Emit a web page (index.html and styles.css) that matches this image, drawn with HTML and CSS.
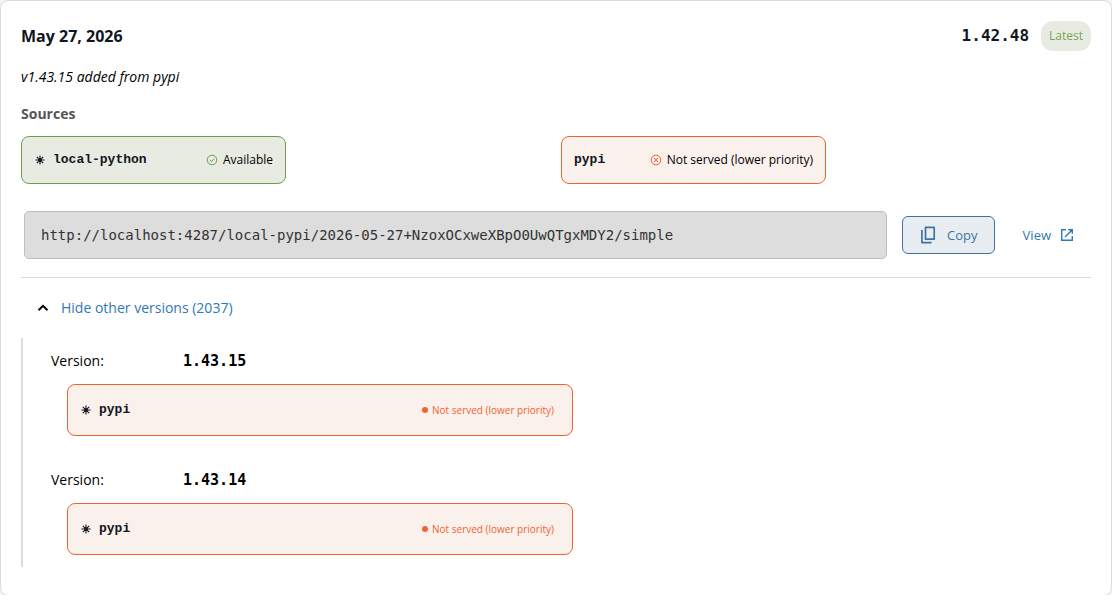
FILE: index.html
```
<!DOCTYPE html>
<html lang="en">
<head>
    <meta charset="utf-8">
    <title>May 27, 2026 - 1.42.48</title>
    <link rel="stylesheet" href="styles.css">
</head>
<body>
    <!-- Shared icons -->
    <svg class="sprite" aria-hidden="true">
        <symbol id="icon-star" viewBox="0 0 10 10">
            <path d="M5 0.4V9.6M0.4 5H9.6M1.8 1.8L8.2 8.2M8.2 1.8L1.8 8.2" stroke="currentColor" stroke-width="1.1" fill="none"/>
            <circle cx="5" cy="5" r="1.8" fill="currentColor" stroke="none"/>
        </symbol>
    </svg>

    <main class="card">
        <header class="card-header">
            <h1>May 27, 2026</h1>
            <div class="current">
                <span class="current-version">1.42.48</span>
                <span class="badge">Latest</span>
            </div>
        </header>

        <p class="note">v1.43.15 added from pypi</p>

        <h2>Sources</h2>
        <div class="sources">
            <div class="source available">
                <svg class="star"><use href="#icon-star"/></svg>
                <span class="source-name">local-python</span>
                <span class="source-status">
                    <svg class="status-icon" viewBox="0 0 12 12">
                        <circle cx="6" cy="6" r="4.8"/>
                        <path d="M3.8 6.1L5.4 7.6L8.2 4.7"/>
                    </svg>
                    Available
                </span>
            </div>
            <div class="source not-served">
                <span class="source-name">pypi</span>
                <span class="source-status">
                    <svg class="status-icon" viewBox="0 0 12 12">
                        <circle cx="6" cy="6" r="4.8"/>
                        <path d="M4 4L8 8M8 4L4 8"/>
                    </svg>
                    Not served (lower priority)
                </span>
            </div>
        </div>

        <div class="url-row">
            <input class="url" type="text" readonly aria-label="Repository URL" value="http://localhost:4287/local-pypi/2026-05-27+NzoxOCxweXBpO0UwQTgxMDY2/simple">
            <button class="copy" type="button">
                <svg class="copy-icon" viewBox="0 0 20 20">
                    <path d="M6.5 2.4H15.2V14.2H6.5ZM2.9 5V17.6H12.6"/>
                </svg>
                Copy
            </button>
            <a class="view" href="#">
                View
                <svg class="view-icon" viewBox="0 0 14 14">
                    <path d="M6 1.7H1.7V12.3H12.3V8M8.2 1.7H12.3V5.8M12.1 1.9L5 9"/>
                </svg>
            </a>
        </div>

        <button class="toggle" type="button" aria-expanded="true">
            <svg class="chevron" viewBox="0 0 12 12">
                <path d="M1.5 8.3L6 3.8L10.5 8.3"/>
            </svg>
            Hide other versions (2037)
        </button>

        <div class="versions">
            <section class="version">
                <div class="version-title">
                    <span>Version:</span>
                    <strong>1.43.15</strong>
                </div>
                <div class="version-sources">
                    <div class="source not-served">
                        <svg class="star"><use href="#icon-star"/></svg>
                        <span class="source-name">pypi</span>
                        <span class="dot-status">Not served (lower priority)</span>
                    </div>
                </div>
            </section>
            <section class="version">
                <div class="version-title">
                    <span>Version:</span>
                    <strong>1.43.14</strong>
                </div>
                <div class="version-sources">
                    <div class="source not-served">
                        <svg class="star"><use href="#icon-star"/></svg>
                        <span class="source-name">pypi</span>
                        <span class="dot-status">Not served (lower priority)</span>
                    </div>
                </div>
            </section>
        </div>
    </main>
</body>
</html>
```
FILE: styles.css
```
* {
    box-sizing: border-box;
}
body {
    margin: 0;
    background-color: #f5f5f5;
    color: #000;
    font-family: "Open Sans", sans-serif;
    font-size: 14px;
    line-height: 20px;
}
h1, h2, p {
    margin: 0;
}
button, input {
    font: inherit;
}
svg {
    flex-shrink: 0;
    fill: none;
    stroke: currentColor;
}
.sprite {
    display: none;
}
.card {
    padding: 20px 20px 28px;
    border: 1px solid #dcdcdc;
    border-radius: 8px;
    background-color: #fff;
}

/* Header */
.card-header {
    display: flex;
    justify-content: space-between;
    align-items: center;
}
h1 {
    color: #111722;
    font-size: 16px;
}
.current {
    display: flex;
    align-items: center;
    gap: 12px;
}
.current-version {
    color: #111722;
    font-family: "DejaVu Sans Mono", monospace;
    font-size: 16px;
    font-weight: bold;
}
.badge {
    padding: 5px 8px;
    border-radius: 12px;
    background-color: #e8ebe1;
    color: #7aa35a;
    font-size: 12px;
}
.note {
    margin-top: 16px;
    font-size: 14px;
    font-style: italic;
}
h2 {
    margin-top: 17px;
    color: #555;
    font-size: 14px;
}

/* Sources */
.sources {
    display: grid;
    grid-template-columns: 1fr 1fr;
    gap: 10px;
    margin-top: 12px;
}
.source {
    display: flex;
    align-items: center;
    border: 1px solid;
    border-radius: 8px;
}
.sources .source {
    width: 50%;
    height: 48px;
    padding: 0 12px;
}
.available {
    border-color: #6f9d4d;
    background-color: #e8ebe1;
}
.not-served {
    border-color: #f0652f;
    background-color: #faf0ec;
}
.star {
    width: 10px;
    height: 10px;
    margin: 0 8px 0 1px;
    color: #111722;
}
.source-name {
    color: #111722;
    font-family: "Liberation Mono", monospace;
    font-size: 13px;
    font-weight: bold;
}
.source-status {
    display: flex;
    align-items: center;
    gap: 5px;
    margin-left: auto;
    font-size: 12px;
    white-space: nowrap;
}
.status-icon {
    width: 12px;
    height: 12px;
}
.available .status-icon {
    color: #6f9d4d;
}
.not-served .status-icon {
    color: #f0652f;
}

/* Repository URL */
.url-row {
    display: flex;
    align-items: center;
    margin-top: 24px;
    padding: 3px 3px 18px;
    border-bottom: 1px solid #dcdcdc;
}
.url {
    flex: 1;
    min-width: 0;
    height: 48px;
    padding: 0 16px;
    border: 1px solid #bdbdbd;
    border-radius: 5px;
    background-color: #ddd;
    color: #333;
    font-family: "DejaVu Sans Mono", monospace;
    font-size: 14px;
}
.copy {
    display: flex;
    align-items: center;
    gap: 8px;
    height: 38px;
    margin-left: 15px;
    padding: 0 16px;
    border: 1px solid #3f73a3;
    border-radius: 6px;
    background-color: #e8edf1;
    color: #3f73a3;
    font-size: 13px;
    cursor: pointer;
}
.copy-icon {
    width: 20px;
    height: 20px;
    stroke-width: 1.7;
    stroke-linejoin: round;
}
.view {
    display: flex;
    align-items: center;
    gap: 9px;
    margin: 0 14px 0 28px;
    color: #3178b5;
    font-size: 13px;
    text-decoration: none;
}
.view-icon {
    width: 14px;
    height: 14px;
    stroke-width: 1.4;
}

/* Other versions */
.toggle {
    display: flex;
    align-items: center;
    gap: 12px;
    margin-top: 20px;
    padding: 0 16px;
    border: 0;
    background: none;
    color: #3178b5;
    cursor: pointer;
}
.chevron {
    width: 12px;
    height: 12px;
    color: #000;
    stroke-width: 2;
}
.versions {
    display: grid;
    gap: 34px;
    margin-top: 20px;
    padding: 13px 0 12px 28px;
    border-left: 2px solid #dcdcdc;
}
.version-title {
    display: grid;
    grid-template-columns: 120px 1fr;
    gap: 12px;
}
.version-title strong {
    font-family: "DejaVu Sans Mono", monospace;
    font-size: 15px;
}
.version-sources {
    display: grid;
    grid-template-columns: 1fr 1fr;
    gap: 12px;
    margin: 13px 0 0 16px;
}
.version-sources .source {
    height: 52px;
    padding: 0 18px 0 12px;
}
.dot-status {
    display: flex;
    align-items: center;
    gap: 4px;
    margin-left: auto;
    color: #f0652f;
    font-size: 10px;
}
.dot-status::before {
    content: "";
    width: 6px;
    height: 6px;
    border-radius: 50%;
    background-color: #f0652f;
}
```
